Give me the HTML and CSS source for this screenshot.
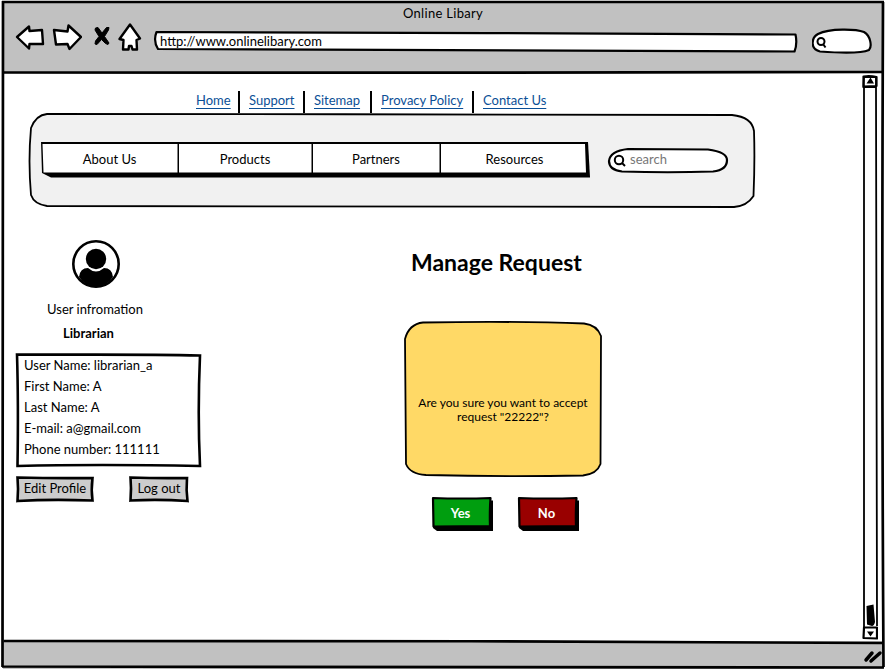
FILE: index.html
```html
<!DOCTYPE html>
<html lang="en">
<head>
<meta charset="utf-8">
<title>Online Libary</title>
<link rel="stylesheet" href="styles.css">
</head>
<body>
<div class="window">
  <header class="chrome">
    <div class="title">Online Libary</div>
    <div class="toolbar">
      <svg class="ico back" width="30" height="30" viewBox="0 0 30 30"><path d="M2 15 L14 4.5 L14.5 9 L27 8 L28 22 L14.5 22 L14 26.500Z"/></svg>
      <svg class="ico forward" width="30" height="30" viewBox="0 0 30 30"><path d="M29 15 L17.500 27 L15.500 22 L4 22.500 L2 8 L15.500 9.500 L16.500 3.500Z"/></svg>
      <svg class="ico stop" width="18" height="30" viewBox="0 0 18 30"><path d="M2.500 6 L5 5.500 L9 11 L13.500 5.500 L16 5.500 L15.500 8 L11.500 14.500 L16 21 L15 22.500 L12.500 21.500 L8.500 17.500 L4 22.500 L2 22 L2.500 19 L6 14.500 L2 8Z"/></svg>
      <svg class="ico home" width="24" height="30" viewBox="0 0 24 30"><path d="M12 2.500 L22 16.500 L18.500 18 L19 27.500 L14.500 27.500 L13.500 24 L11 24 L10.500 27.500 L5 27.500 L5.500 18 L1.500 17Z"/></svg>
      <div class="url">
        <svg class="shape" viewBox="0 0 644 22"><path class="w2 paper" d="M2.500 1 C250 .8 400 3 641.500 3.500 Q643.500 13 640.500 20.500 L4 18 Q-1 10 2.500 1Z"/></svg>
        <span>http://www.onlinelibary.com</span>
      </div>
      <svg class="browser-search" width="60" height="26" viewBox="0 0 60 26"><path class="w2 paper" d="M8 23.500 C-2 21 -1 10 6 6 C18 0 44 1 52 4 C59 8 60 19 57 22 C48 26 28 25 8 23.500Z"/><g class="lens"><circle cx="9" cy="13.500" r="3.500"/><path d="M11 16 L13.500 19.500"/></g></svg>
    </div>
  </header>
  <div class="viewport">
    <main class="page">
      <nav class="links"><a class="l-home">Home</a><a class="l-support">Support</a><a class="l-map">Sitemap</a><a class="l-privacy">Provacy Policy</a><a class="l-contact">Contact Us</a></nav>
      <section class="banner">
        <svg class="shape" viewBox="0 0 726 95"><path class="thin soft" d="M18 1 C240 .6 490 2 703 2 Q723 4 725 18 Q726 48 724.500 83 Q718 93 705 94 C480 95 250 93 18 93 Q5 91 2 82 Q-1 48 2 15 Q7 2 18 1Z"/></svg>
        <div class="menu">
          <svg class="shape" viewBox="0 0 549 36"><path class="ink" d="M0 0 L547 0 L549 35.500 L10 35.500 L1 31Z"/><path class="paper" d="M1.500 2 L136.500 2 V30.500 L2.500 30.500Z M138 2 H270.500 V30.500 H138Z M272 2 H398.500 V30.500 H272Z M400 2 H544 L545 30.500 H400Z"/></svg>
          <span class="m-about">About Us</span><span class="m-products">Products</span><span class="m-partners">Partners</span><span class="m-resources">Resources</span>
        </div>
        <div class="search">
          <svg class="shape" viewBox="0 0 120 25"><path class="w2 paper" d="M20 1 L100 1.500 Q119 4 119 12 Q119 22 105 23.500 Q60 25 14 23.500 Q1 22 1 13 Q2 3 20 1Z"/><g class="lens"><circle cx="11" cy="12" r="4.200"/><path d="M14 15 L17 18"/></g></svg>
          <span>search</span>
        </div>
      </section>
      <div class="columns">
        <aside class="profile">
          <svg class="avatar" width="48" height="48" viewBox="0 0 48 48"><circle class="ring" cx="24" cy="24" r="22.700"/><circle cx="24" cy="19" r="10.200"/><path d="M7 37 Q8 28 16 28 Q24 35 32 28 Q40 28 41 37 Q35 46.500 24 46.500 Q13 46.500 7 37Z"/></svg>
          <div class="caption">User infromation</div>
          <div class="role">Librarian</div>
          <div class="details">
            <svg class="shape" viewBox="0 0 185 114"><path class="w25" d="M1 1.500 C60 2 120 1 184 2.500 Q181.500 60 184 113 Q80 111 1.500 113 Q2.500 50 1 1.500Z"/></svg>
            <div class="d1">User Name: librarian_a</div><div class="d2">First Name: A</div><div class="d3">Last Name: A</div><div class="d4">E-mail: a@gmail.com</div><div class="d5">Phone number: 111111</div>
          </div>
          <div class="actions">
            <div class="btn edit"><svg class="shape" viewBox="0 0 78 26"><path class="w25 grey" d="M1.500 1.500 Q40 2.500 76.500 2 Q75 14 76.500 24.500 Q35 23 1.500 25 Q2.500 12 1.500 1.500Z"/></svg><span>Edit Profile</span></div>
            <div class="btn out"><svg class="shape" viewBox="0 0 60 26"><path class="w25 grey" d="M1.500 1.500 Q30 2.500 58 2 Q57 14 58.500 25 Q30 23 1.500 24.500 Q2.500 12 1.500 1.500Z"/></svg><span>Log out</span></div>
          </div>
        </aside>
        <section class="request">
          <h1>Manage Request</h1>
          <div class="card">
            <svg class="shape" viewBox="0 0 198 156"><path class="thin yellow" d="M19 1.500 C80 .5 140 1 180 2.500 Q193 4 197 15 L196.500 143 Q193 153 179 154.500 Q100 156 22 154 Q6 153 2 143 L1 18 Q5 3 19 1.500Z"/></svg>
            <p><span class="q1">Are you sure you want to accept</span><br><span class="q2">request "22222"?</span></p>
          </div>
          <div class="answers">
            <div class="answer"><svg class="shape" viewBox="0 0 61 34"><path class="ink" d="M4 3.500 H61 V34 H5 L1 31Z"/><path class="w2 green" d="M1 1 Q30 2 58.500 1 Q57.500 15 58 29 L1.500 29.500Z"/></svg><span class="yes">Yes</span></div>
            <div class="answer"><svg class="shape" viewBox="0 0 61 34"><path class="ink" d="M4 3.500 H61 V34 H5 L1 31Z"/><path class="w2 red" d="M1 1 Q30 2 58.500 1 Q57.500 15 58 29 L1.500 29.500Z"/></svg><span class="no">No</span></div>
          </div>
        </section>
      </div>
    </main>
    <svg class="scrollbar" width="16" height="566" viewBox="0 0 16 566"><path class="thin" d="M2 3 H14 L14 13 H1.500Z M2 13 Q2.500 300 2 553 M14 13 Q15 300 15 552"/><path class="w2" d="M1.500 2.500 Q8 1.500 14.500 3 V12 L1.500 12.500Z M2 553.500 H15 V564.500 L1.500 564Z"/><path class="ink" d="M4.500 9.500 L8.500 3.500 L12 9.500Z M5 557.500 H12 L8.500 562.500Z M4.500 532 L11.500 530.500 L13 548 Q12 552 10 552 L5 550.500Z"/></svg>
  </div>
  <footer class="status"><svg class="grip" width="20" height="15" viewBox="0 0 20 15"><path d="M3 11 L9 4 M8 12 L17 4"/></svg></footer>
  <svg class="frame" width="885" height="669" viewBox="0 0 885 669"><path d="M2 2 H884 M3 72.500 C240 74 620 72 883 72 M3.500 641 C280 642 600 640 882 643"/><path d="M3 1 Q4 300 2.500 667 M883 2 Q881.500 350 883.500 667 M2 666.500 Q400 665 884 667.500"/></svg>
</div>
</body>
</html>
```
FILE: styles.css
```css
* { box-sizing: border-box; }
body { margin: 0; background: #fff; color: #000; font: 13px/20px Lato, sans-serif; }
.window { position: relative; width: 885px; height: 669px; display: flex; flex-direction: column; overflow: hidden; }
.frame { position: absolute; inset: 0; fill: none; stroke: #000; stroke-width: 2.7; pointer-events: none; }
.chrome { height: 73px; margin: 2px 2px 0 3px; background: #c1c1c1; flex: none; height: 71px; }
.title { text-align: center; height: 20px; padding-top: 1px; letter-spacing: .3px; }
.toolbar { display: flex; padding-left: 12px; }
.toolbar > svg, .toolbar > div { flex: none; }
.ico { fill: #fff; stroke: #000; stroke-width: 2.4; stroke-linejoin: round; }
.forward { margin-left: 7px; }
.stop { margin-left: 11px; fill: #000; stroke-width: 1; }
.home { margin-left: 7px; }
.url { position: relative; width: 644px; height: 22px; margin: 9px 0 0 12px; padding-left: 6px; line-height: 20px; }
.browser-search { margin: 6px 0 0 14px; }
.shape { position: absolute; left: 0; top: 0; width: 100%; height: 100%; fill: none; overflow: visible; }
.shape ~ * { position: relative; }
.thin { stroke: #000; stroke-width: 1.8; fill: none; }
.w2 { stroke: #000; stroke-width: 2.2; fill: none; stroke-linejoin: round; }
.w25 { stroke: #000; stroke-width: 2.6; fill: none; }
.ink { fill: #000; }
.paper { fill: #fff; }
.soft { fill: #f1f1f1; }
.grey { fill: #ccc; }
.yellow { fill: #ffd966; }
.green { fill: #009e0f; }
.red { fill: #900; }
.lens { fill: none; stroke: #000; stroke-width: 2; }
.viewport { flex: 1; display: flex; }
.page { flex: 1; padding: 18px 0 0 16px; }
.scrollbar { margin: 1px 7px 0 0; fill: none; flex: none; }
.links { display: flex; height: 22px; padding-left: 171px; color: #0b4f96; line-height: 19px; }
.links a { padding: 0 9px; text-decoration: underline; text-decoration-thickness: 1px; text-underline-offset: 3px; border-left: 2px solid #000; white-space: nowrap; }
.links a:first-child { border-left: 0; }
.l-home { width: 51px; }
.l-support { width: 65px; }
.l-map { width: 67px; }
.l-privacy { width: 102px; }
.l-contact { width: 90px; }
.banner { position: relative; display: flex; width: 726px; height: 95px; margin-left: 13px; }
.menu { position: relative; display: grid; grid-template-columns: 137px 134px 128px 149px; width: 549px; height: 36px; margin: 29px 0 0 12px; text-align: center; line-height: 34px; }
.search { position: relative; width: 120px; height: 25px; margin: 35px 0 0 18px; padding-left: 22px; line-height: 22px; color: #777; }
.columns { display: flex; padding-top: 32px; }
.profile { width: 388px; }
.avatar { display: block; margin-left: 56px; }
.ring { fill: none; stroke: #000; stroke-width: 2.6; }
.caption { margin-top: 11px; padding-left: 31px; }
.role { font-weight: 700; margin-top: 4px; padding-left: 47px; }
.details { position: relative; width: 185px; height: 114px; margin-top: 10px; padding: 2px 0 0 8px; line-height: 21px; }
.actions { display: flex; gap: 35px; margin-top: 9px; }
.btn { position: relative; height: 26px; width: 78px; line-height: 25px; text-align: center; white-space: nowrap; }
.out { width: 60px; }
.request { width: 198px; }
h1 { margin: 6px 0 0; font-size: 23px; line-height: 32px; padding-left: 7px; white-space: nowrap; }
.card { position: relative; width: 198px; height: 156px; margin-top: 43px; padding-top: 75px; text-align: center; font-size: 12px; line-height: 14px; }
.card p { margin: 0; white-space: nowrap; }
.answers { display: flex; gap: 25px; margin: 20px 0 0 28px; }
.answer { position: relative; width: 61px; height: 34px; color: #fff; font-weight: 700; text-align: center; line-height: 33px; padding-right: 4px; }
.status { position: relative; height: 28px; margin: 0 2px 0 3px; flex: none; background: #c1c1c1; display: flex; justify-content: flex-end; padding: 8px 0; }
.grip { stroke: #000; stroke-width: 3.5; stroke-linecap: round; }
```
